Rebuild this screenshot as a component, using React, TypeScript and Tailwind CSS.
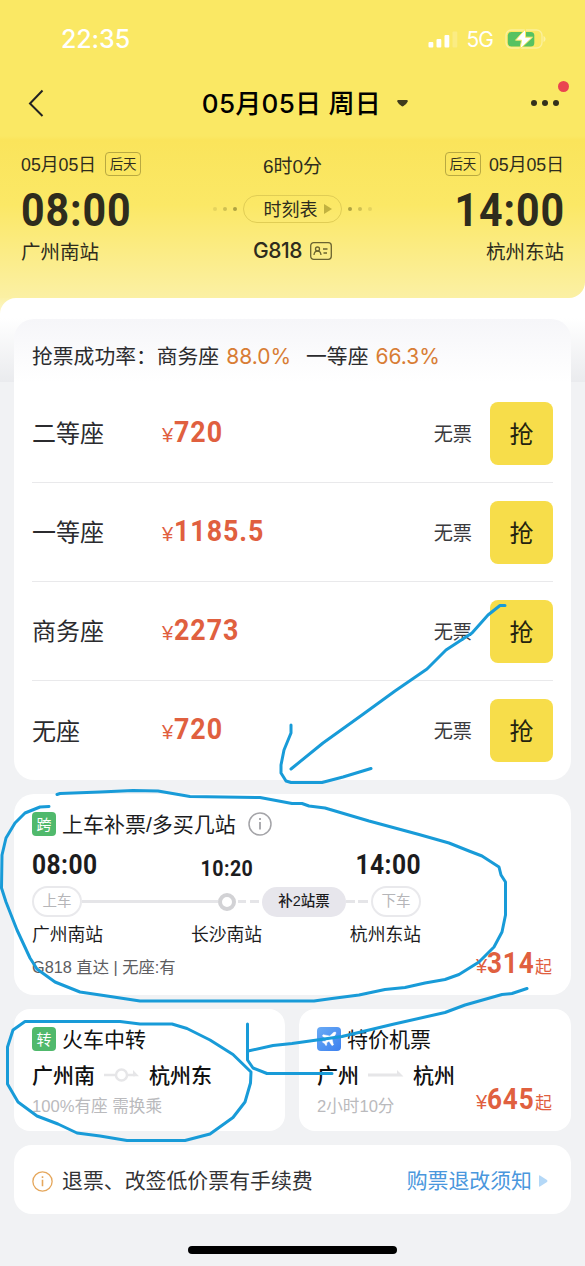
import type { ReactNode } from "react";
import clsx from "clsx";
import { Plane } from "lucide-react";

const SEATS = [
  { name: "二等座", price: "720" },
  { name: "一等座", price: "1185.5" },
  { name: "商务座", price: "2273" },
  { name: "无座", price: "720" },
];

// Roboto squeezed a little stands in for the DIN figures
const DIN = "font-['Roboto','Noto_Sans_CJK_SC',sans-serif] font-bold";

function StatusBar() {
  return (
    <div className="flex h-[78px] items-center justify-between pl-[61px] pr-[39px] text-white">
      <span className="font-['Inter',sans-serif] text-[25px] font-medium leading-none tracking-[-0.1px]">22:35</span>
      <div className="flex items-center">
        <svg width="30" height="17" viewBox="0 0 30 17" fill="currentColor">
          <rect x="0.5" y="11" width="4.8" height="5.5" rx="1" />
          <rect x="8.5" y="8" width="4.8" height="8.5" rx="1" />
          <rect x="16.5" y="4" width="4.8" height="12.5" rx="1" />
          <rect x="24.500" y="0.500" width="4.8" height="16" rx="1" opacity="0.2" />
        </svg>
        <span className="ml-[9px] pt-[1px] font-['Inter',sans-serif] text-[21px] leading-none tracking-[-1px]">5G</span>
        <svg className="ml-[12px]" width="41" height="22" viewBox="0 0 41 22">
          <rect x="1" y="2" width="36" height="18" rx="5.5" fill="none" stroke="#fff" strokeOpacity="0.35" strokeWidth="1.4" />
          <path d="M38.5 8v6c1.400-.6 2-1.700 2-3s-.6-2.400-2-3z" fill="#fff" fillOpacity="0.4" />
          <rect x="2.800" y="4" width="26.500" height="14.500" rx="3.500" fill="#56c261" />
          <path d="M20.500 1 10.500 12.200h6L15 21l12.500-11.800h-7z" fill="#fff" stroke="#fbe966" strokeWidth="1" />
        </svg>
      </div>
    </div>
  );
}

function NavBar() {
  return (
    <div className="relative flex h-[50px] items-center justify-between pl-[28px] pr-[26px]">
      <svg width="16" height="28" viewBox="0 0 16 28" fill="none" stroke="#222" strokeWidth="2">
        <path d="M14.500 1.500 2 14.500l12.500 12.500" />
      </svg>
      <h1 className="flex items-center pl-[35px] pt-[1px] font-['Inter','Noto_Sans_CJK_SC',sans-serif] text-[26px] font-medium leading-none tracking-[0.3px] text-black">
        <span className="whitespace-nowrap">05月05日 周日</span>
        <svg className="ml-[16px]" width="11" height="7" viewBox="0 0 11 7">
          <path d="M1 0h9q1 0 .8 1.500Q10 3.500 6.500 6q-1 .8-2 0Q1 3.500.2 1.500 0 0 1 0z" fill="#3f3a1c" />
        </svg>
      </h1>
      <div className="flex gap-[5px]">
        <i className="size-[6px] rounded-full bg-[#33301c]" />
        <i className="size-[6px] rounded-full bg-[#33301c]" />
        <i className="size-[6px] rounded-full bg-[#33301c]" />
      </div>
      <i className="absolute right-[16px] top-[3px] size-[11px] rounded-full bg-[#ea4450]" />
    </div>
  );
}

function DayTag() {
  return (
    <span className="flex h-[24px] w-[36px] items-center justify-center rounded-[4px] border border-[#b9a941] pt-[1px] text-[13.500px] leading-none">
      后天
    </span>
  );
}

function Dots({ flip }: { flip?: boolean }) {
  return (
    <span className={clsx("flex gap-[6px]", flip && "rotate-180")}>
      <i className="size-[4px] rounded-full bg-[#8f8430]/20" />
      <i className="size-[4px] rounded-full bg-[#8f8430]/40" />
      <i className="size-[4px] rounded-full bg-[#8f8430]/70" />
    </span>
  );
}

function TripHeader() {
  return (
    <div className="h-[170px] px-[21px] pt-[24px] text-[#2e2c1d]">
      <div className="grid h-[24px] grid-cols-[1fr_auto_1fr] items-center text-[17.800px] leading-none">
        <div className="flex items-center gap-[9px]">
          <span className="pt-[3px]">05月05日</span>
          <DayTag />
        </div>
        <span className="pt-[4px] text-[19px]">6时0分</span>
        <div className="flex items-center justify-end gap-[8px]">
          <DayTag />
          <span className="pt-[3px]">05月05日</span>
        </div>
      </div>
      <div className="grid h-[65px] grid-cols-[1fr_auto_1fr] items-center">
        <span className={clsx(DIN, "origin-left scale-x-[0.895] pt-[3px] text-[46px] leading-none tracking-[1px]")}>
          08:00
        </span>
        <div className="flex items-center gap-[6px]">
          <Dots />
          <span className="flex h-[28px] w-[99px] items-center justify-center gap-[6px] rounded-full border border-[#e0cd55] pl-[10px] text-[18px] leading-none">
            <span className="pt-[2px]">时刻表</span>
            <svg width="8" height="10" viewBox="0 0 8 10">
              <path d="M0 0v10l8-5z" fill="#c2b240" />
            </svg>
          </span>
          <Dots flip />
        </div>
        <span
          className={clsx(DIN, "-mr-[1px] origin-right scale-x-[0.895] pt-[3px] text-right text-[46px] leading-none tracking-[1px]")}
        >
          14:00
        </span>
      </div>
      <div className="grid h-[20px] grid-cols-[1fr_auto_1fr] items-center text-[19.500px] leading-none">
        <span className="pt-[2px]">广州南站</span>
        <span className="-mt-[2px] flex items-center gap-[8px] font-['Inter',sans-serif] text-[21px] font-medium tracking-[-0.5px]">
          G818
          <svg width="22" height="18" viewBox="0 0 22 18" fill="none" stroke="#6a6330" strokeWidth="1.300">
            <rect x="0.700" y="0.700" width="20.600" height="16.600" rx="3" />
            <circle cx="7.500" cy="7" r="2" />
            <path d="M4 13c.2-2.500 1.700-3.800 3.500-3.800S10.800 10.500 11 13M13 7h4.500M13.500 11H17" />
          </svg>
        </span>
        <span className="pt-[2px] text-right">杭州东站</span>
      </div>
    </div>
  );
}

function Price({ value, from }: { value: string; from?: boolean }) {
  return (
    <span className="flex items-baseline leading-none text-[#e0603f]">
      <span className="text-[20px]">¥</span>
      <span
        className={clsx(
          DIN,
          "origin-left text-[29px] leading-none tracking-[1px]",
          from ? "-mr-[5px] scale-x-[0.9]" : "ml-[1px] scale-x-[0.925]",
        )}
      >
        {value}
      </span>
      {from && <span className="text-[17px]">起</span>}
    </span>
  );
}

function SeatCard() {
  return (
    <section className="h-[461px] rounded-[20px] bg-gradient-to-b from-[#f6f6f9] from-0% to-white to-[63px]">
      <div className="flex h-[65px] items-center px-[18px] pt-[11px] text-[20.800px] leading-none text-[#2b2b2e]">
        <span>抢票成功率：商务座</span>
        <span className="-mt-[2px] ml-[7px] font-['Inter',sans-serif] text-[21px] text-[#d87d35]">88.0%</span>
        <span className="ml-[15px]">一等座</span>
        <span className="-mt-[2px] ml-[7px] font-['Inter',sans-serif] text-[21px] text-[#d87d35]">66.3%</span>
      </div>
      <ul className="px-[18px]">
        {SEATS.map((seat, i) => (
          <li
            key={seat.name}
            className={clsx("flex h-[99px] items-center", i < SEATS.length - 1 && "border-b border-[#e9e9eb]")}
          >
            <span className="w-[130px] pt-[2px] text-[24px] leading-none text-[#2b2b2e]">{seat.name}</span>
            <span className="-mt-[2px]">
              <Price value={seat.price} />
            </span>
            <span className="ml-auto mr-[18px] pt-[3px] text-[19.200px] leading-none text-[#3a3a3d]">无票</span>
            <button className="size-[63px] rounded-[8px] bg-[#f7dd4a] pt-[3px] text-[24px] leading-none text-[#24230f]">
              抢
            </button>
          </li>
        ))}
      </ul>
    </section>
  );
}

function Badge({ children, className }: { children: ReactNode; className: string }) {
  return (
    <span className={clsx("flex size-[24px] items-center justify-center rounded-[4px] text-[15px] leading-none text-white", className)}>
      {children}
    </span>
  );
}

function InfoIcon({ size, className }: { size: number; className: string }) {
  return (
    <svg width={size} height={size} viewBox="0 0 24 24" fill="none" stroke="currentColor" strokeWidth="1.500" className={className}>
      <circle cx="12" cy="12" r="11" />
      <path d="M12 10v7.500M12 6v2" strokeWidth="1.800" />
    </svg>
  );
}

function ExtendCard() {
  return (
    <section className="relative h-[201px] rounded-[20px] bg-white px-[18px] pt-[16px] text-[#1c1c1e]">
      <div className="flex h-[28px] items-center text-[21px] leading-none">
        <Badge className="bg-[#50b96c]">跨</Badge>
        <span className="ml-[6px]">上车补票/多买几站</span>
        <InfoIcon size={24} className="ml-[12px] text-[#a4a4a8]" />
      </div>
      <div className={clsx(DIN, "flex h-[48px] w-[389px] items-center justify-between pt-[6px] leading-none")}>
        <span className="origin-left scale-x-[0.91] text-[27px] tracking-[0.5px]">08:00</span>
        <span className="ml-[38px] scale-x-[0.91] pt-[7px] text-[21.500px] tracking-[0.500px]">10:20</span>
        <span className="ml-[38px] origin-right scale-x-[0.91] text-[27px] tracking-[0.5px]">14:00</span>
      </div>
      <div className="flex h-[31px] w-[389px] items-center text-[14.500px] leading-none text-[#b5b5b8]">
        <span className="flex h-[31px] w-[50px] items-center justify-center rounded-full border-2 border-[#e9e9ec]">上车</span>
        <i className="h-[3px] flex-1 bg-[#e5e5e8]" />
        <i className="size-[18px] rounded-full border-4 border-[#d2d2d5]" />
        <i className="ml-[2px] h-[3px] w-[8px] bg-[#e5e5e8]" />
        <i className="ml-[4px] h-[3px] w-[9px] bg-[#e5e5e8]" />
        <span className="ml-[3px] flex h-[30px] w-[84px] items-center justify-center rounded-full bg-[#e7e6ec] font-medium text-[#1c1c1e]">
          补2站票
        </span>
        <i className="h-[3px] w-[9px] bg-[#e5e5e8]" />
        <i className="mx-[3px] h-[3px] w-[10px] bg-[#e5e5e8]" />
        <span className="flex h-[31px] w-[50px] items-center justify-center rounded-full border-2 border-[#e9e9ec]">下车</span>
      </div>
      <div className="mt-[8px] flex h-[22px] w-[389px] items-center justify-between text-[17.800px] leading-none">
        <span>广州南站</span>
        <span>长沙南站</span>
        <span>杭州东站</span>
      </div>
      <p className="mt-[10px] h-[20px] text-[16.300px] leading-[20px] text-[#5d5d61]">G818 直达 | 无座:有</p>
      <div className="absolute bottom-[17px] right-[19px]">
        <Price value="314" from />
      </div>
    </section>
  );
}

function TransferCard() {
  return (
    <section className="h-[122px] w-[271px] rounded-[16px] bg-white px-[18px] pt-[16px] text-[#111]">
      <div className="flex h-[28px] items-center text-[21px] leading-none">
        <Badge className="bg-[#50b96c]">转</Badge>
        <span className="ml-[6px]">火车中转</span>
      </div>
      <div className="mt-[8px] flex h-[28px] items-center text-[21px] font-medium leading-none">
        广州南
        <svg className="mx-[9px]" width="36" height="16" viewBox="0 0 36 16" fill="none" stroke="#e6e6e8">
          <path d="M0 8h11M24 8h7" strokeWidth="2.500" />
          <circle cx="17.500" cy="8" r="5.500" strokeWidth="2.500" />
          <path d="M29 3v6.200h6z" fill="#e6e6e8" stroke="none" />
        </svg>
        杭州东
      </div>
      <p className="mt-[8px] h-[20px] text-[16.600px] leading-[20px] text-[#bababd]">100%有座 需换乘</p>
    </section>
  );
}

function FlightCard() {
  return (
    <section className="relative h-[122px] w-[272px] rounded-[16px] bg-white px-[18px] pt-[16px] text-[#111]">
      <div className="flex h-[28px] items-center text-[21px] leading-none">
        <Badge className="bg-gradient-to-br from-[#69aaf5] to-[#3d80ef]">
          <Plane size={18} fill="currentColor" strokeWidth={0.5} />
        </Badge>
        <span className="ml-[6px]">特价机票</span>
      </div>
      <div className="mt-[8px] flex h-[28px] items-center text-[21px] font-medium leading-none">
        广州
        <svg className="mx-[9px]" width="36" height="10" viewBox="0 0 36 10" fill="#e6e6e8">
          <path d="M0 3.500h29V0l6.500 6.500H0z" />
        </svg>
        杭州
      </div>
      <p className="mt-[8px] h-[20px] text-[16.600px] leading-[20px] text-[#bababd]">2小时10分</p>
      <div className="absolute bottom-[17px] right-[19px]">
        <Price value="645" from />
      </div>
    </section>
  );
}

function RefundNotice() {
  return (
    <section className="flex h-[69px] items-center rounded-[18px] bg-white pl-[18px] pr-[23px] pt-[3px] text-[20.900px] leading-none text-[#333336]">
      <InfoIcon size={21} className="text-[#e5a75c]" />
      <span className="ml-[9px]">退票、改签低价票有手续费</span>
      <span className="ml-auto text-[#4a97dd]">购票退改须知</span>
      <svg className="ml-[7px]" width="9" height="12" viewBox="0 0 9 12">
        <path d="M0 1q0-1 1-.5L8 5q1 1 0 2l-7 4.500q-1 .5-1-.5z" fill="#b4d8f7" />
      </svg>
    </section>
  );
}

// Freehand marker strokes drawn over the page
function MarkerStrokes() {
  return (
    <svg
      className="pointer-events-none absolute left-0 top-0"
      width="585"
      height="1266"
      viewBox="0 0 585 1266"
      fill="none"
      stroke="#189bd8"
      strokeWidth="3"
      strokeLinejoin="round"
      strokeLinecap="round"
    >
      <path d="M505 605.500H500L488 615 472 633 446 650 427 669 395 691 362 715 323 743 291 769" />
      <path d="M291 725V733L284 750 281 765V773L286 781 291 782.500H322L343 777 371 768.500" />
      <path d="M49 806.500 40 807 25 813 15 823 6 838 2 855 1.500 888 6 902 17 930 30 958 37 969 55 982 80 992 107 996 140 1001H314L332 998.500 359 995 385 989.500 405 987.500 425 983 445 979.500 459 974.500 479 962 494 947 502 932 505.500 915V882L501 875 499 867 482 856 469 851 449 843 419 834.500 369 821 325 808 309 806 302 803.500H292L260 797.500 190 796.500 158 791 133 790.500 100 792 60 793.500 57 794.500" />
      <path d="M25 1021.500H120L140 1024H172L187 1028.500 210 1040 233 1054.500 251 1072 250.500 1083 245 1102 233 1117.500 210 1134 185 1140.500H127L100 1136 77 1133 58 1124 37 1116 18 1102 7.500 1084V1047L13 1030z" />
      <path d="M527 988.500 512 993.500 502 994.500 465 1005 445 1012.500 392 1024.500 342 1036.500 317 1040 292 1043.500 273 1045.500 248 1051" />
      <path d="M247.500 1024V1060L253 1068 267 1073.500H332" />
    </svg>
  );
}

export default function App() {
  return (
    <div className="relative h-[1266px] w-[585px] overflow-hidden bg-[#f1f2f4] font-['Liberation_Sans','Noto_Sans_CJK_SC',sans-serif]">
      <div className="bg-white">
        <header className="h-[298px] rounded-br-[16px] bg-[linear-gradient(#fae864_0px,#fae864_136px,#fae45b_140px,#fbe866_205px,#fbf0a4_298px)]">
          <StatusBar />
          <NavBar />
          <TripHeader />
        </header>
      </div>
      {/* yellow shows only behind the sheet's rounded top-left corner */}
      <div className="bg-[linear-gradient(#fbf1a8,#fdf7cc)] bg-[length:16px_16px] bg-no-repeat">
        <main className="rounded-tl-[16px] bg-[linear-gradient(#fff_0px,#fff_20px,#eaebee_84px,#f1f2f4_84px)] px-[14px] pt-[21px]">
          <SeatCard />
          <div className="mt-[14px]">
            <ExtendCard />
          </div>
          <div className="mt-[14px] flex gap-[14px]">
            <TransferCard />
            <FlightCard />
          </div>
          <div className="mt-[14px]">
            <RefundNotice />
          </div>
        </main>
      </div>
      <div className="mx-auto mt-[32px] h-[8px] w-[209px] rounded-full bg-black" />
      <MarkerStrokes />
    </div>
  );
}
